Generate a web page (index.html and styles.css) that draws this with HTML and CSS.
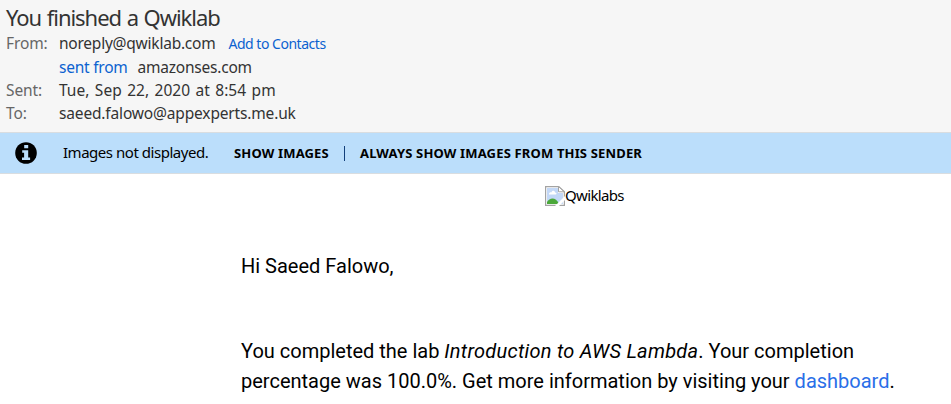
FILE: index.html
```html
<!DOCTYPE html>
<html lang="en">
<head>
<meta charset="utf-8">
<title>You finished a Qwiklab</title>
<link rel="stylesheet" href="styles.css">
</head>
<body>
<header class="header">
  <h1 class="subject"><span>You finished a Qwiklab</span></h1>
  <div class="row"><span class="label from">From:</span><span class="noreply">noreply@qwiklab.com</span><a class="add">Add to Contacts</a></div>
  <div class="row via"><span class="label"></span><a class="sent-from">sent from</a><span class="domain">amazonses.com</span></div>
  <div class="row"><span class="label">Sent:</span><span class="date">Tue, Sep 22, 2020 at 8:54 pm</span></div>
  <div class="row"><span class="label">To:</span><span class="to">saeed.falowo@appexperts.me.uk</span></div>
</header>
<div class="banner">
  <svg class="info" viewBox="0 0 22 22" width="22" height="22"><circle cx="11" cy="11" r="10.8"/><path fill="#bbdefb" d="M9.2 3h4v3.2h-4zM7.2 8.2h6v7.3h1.9V18H7v-2.5h2.1v-4.8H7.2z"/></svg>
  <span class="notice">Images not displayed.</span>
  <b class="show">SHOW IMAGES</b>
  <span class="bar"></span>
  <b class="always">ALWAYS SHOW IMAGES FROM THIS SENDER</b>
</div>
<main class="message">
  <div class="logo">
    <svg width="20" height="20" viewBox="0 0 20 20"><path d="M.6.6h13.2l5.600 5.200v13.600H.6z" fill="#fff" stroke="#a3a3a3" stroke-width="1.2"/><path d="M2 2h11v5h5v11H2z" fill="#c3d8f7"/><path d="M4 8c0-2 2-2 2.400-1.600C7 4 10 4.500 10 6.500c2 0 2 2 .5 2H4z" fill="#fff"/><path d="M2 18v-2c3-5 9-5 12 2z" fill="#4ba83a"/><path d="M13.500.6v5.200h5.700z" fill="#fff" stroke="#a3a3a3"/><path d="M10 20L20 10v4l-6 6z" fill="#fff"/></svg><span class="alt">Qwiklabs</span>
  </div>
  <p class="greeting">Hi Saeed Falowo,</p>
  <p class="text">You completed the lab <em>Introduction to AWS Lambda</em>. Your completion<br>percentage was 100.0%. Get more information by visiting your <a class="dash">dashboard</a>.</p>
</main>
</body>
</html>
```
FILE: styles.css
```css
body {
  margin: 0;
  background: #fff;
  color: #000;
  font: 15.5px/23px "Noto Sans", sans-serif;
  white-space: nowrap;
}
.header {
  box-sizing: border-box;
  height: 132px;
  padding: 3px 6px 0;
  background: #f6f6f6;
  color: #333;
}
.subject {
  margin: 0;
  height: 29px;
  font-size: 22px;
  font-weight: 400;
  line-height: 28px;
  letter-spacing: -1.05px;
  word-spacing: 1px;
}
.row {
  display: flex;
  align-items: baseline;
  height: 23px;
}
.via {
  height: 24px;
  line-height: 25px;
}
.label {
  width: 53px;
  flex: none;
  color: #666;
  letter-spacing: -0.1px;
}
.noreply, .domain, .sent-from { letter-spacing: -0.23px; }
.to { letter-spacing: -0.16px; }
.date {
  letter-spacing: 0.02px;
  word-spacing: 1.4px;
}
.add {
  margin-left: 13px;
  font-size: 14px;
  letter-spacing: -0.48px;
}
.add, .sent-from { color: #0b62d0; }
.domain { margin-left: 10px; }
.banner {
  box-sizing: border-box;
  display: flex;
  align-items: center;
  height: 42px;
  padding-left: 15px;
  border-top: 1px solid #d9dde0;
  border-bottom: 1px solid #d9dde0;
  background: #bbdefb;
}
.info { flex: none; }
.notice {
  width: 171px;
  margin-left: 26px;
  padding-bottom: 1px;
  font-size: 15px;
  letter-spacing: -0.47px;
}
.show, .always {
  font-size: 13px;
  font-weight: 700;
  letter-spacing: 0.16px;
}
.show { width: 109px; }
.bar {
  width: 1px;
  height: 15px;
  margin: 0 15px 0 1px;
  background: #123f7a;
}
.logo {
  display: flex;
  align-items: center;
  height: 20px;
  padding: 12px 0 0 545px;
}
.alt {
  padding-bottom: 2px;
  font-size: 15px;
  letter-spacing: -0.65px;
}
.greeting, .text {
  margin: 0 0 0 241px;
  font: 20px/30px Roboto, sans-serif;
}
.greeting { margin-top: 45px; }
.text { margin-top: 55px; }
.text em { letter-spacing: 0.25px; }
.dash { color: #2a6fe8; }
```
